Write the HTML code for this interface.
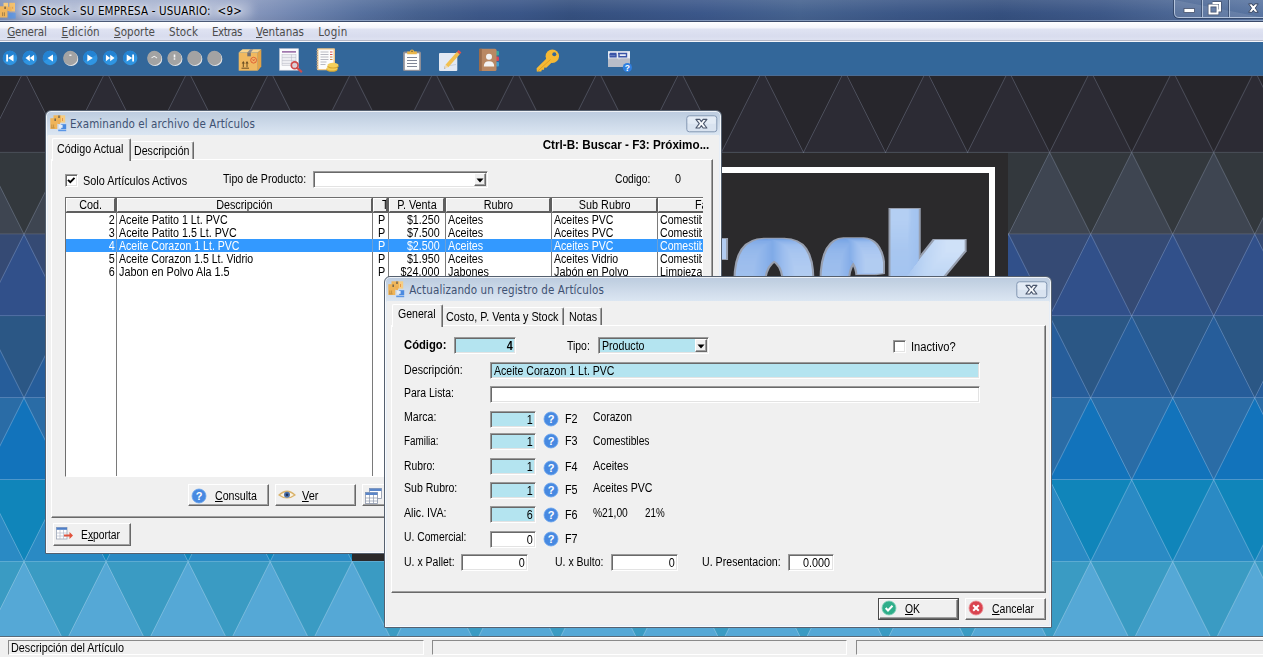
<!DOCTYPE html><html><head><meta charset="utf-8"><title>SD Stock</title><style>html,body{margin:0;padding:0}body{width:1263px;height:657px;overflow:hidden;position:relative;background:#27262c;font-family:"Liberation Sans",sans-serif;font-size:11px;color:#000}u{text-decoration:underline;text-underline-offset:1px}</style></head><body><svg style="position:absolute;left:0;top:76px" width="1263" height="560" viewBox="0 76 1263 560"><rect x="0" y="70.60" width="1263" height="82.33" fill="#27262c"/><path d="M-58.05 70.60L-17.02 152.43L-99.07 152.43ZM24.00 70.60L65.03 152.43L-17.02 152.43ZM106.05 70.60L147.07 152.43L65.03 152.43ZM188.10 70.60L229.12 152.43L147.07 152.43ZM270.15 70.60L311.17 152.43L229.12 152.43ZM352.20 70.60L393.22 152.43L311.18 152.43ZM434.25 70.60L475.27 152.43L393.23 152.43ZM516.30 70.60L557.32 152.43L475.27 152.43ZM598.35 70.60L639.38 152.43L557.33 152.43ZM680.40 70.60L721.42 152.43L639.38 152.43ZM762.45 70.60L803.47 152.43L721.42 152.43ZM844.50 70.60L885.52 152.43L803.48 152.43ZM926.55 70.60L967.57 152.43L885.52 152.43ZM1008.60 70.60L1049.62 152.43L967.57 152.43ZM1090.65 70.60L1131.67 152.43L1049.62 152.43ZM1172.70 70.60L1213.73 152.43L1131.67 152.43ZM1254.75 70.60L1295.78 152.43L1213.72 152.43Z" fill="#2c2b34" stroke="rgba(170,180,205,0.28)" stroke-width="1"/><path d="M0 152.43H1263" stroke="rgba(170,180,205,0.28)" stroke-width="1" fill="none"/><rect x="0" y="152.43" width="1263" height="82.33" fill="#33383d"/><path d="M-17.02 152.43L24.01 234.26L-58.04 234.26ZM65.03 152.43L106.06 234.26L24.01 234.26ZM147.08 152.43L188.10 234.26L106.05 234.26ZM229.13 152.43L270.15 234.26L188.10 234.26ZM311.18 152.43L352.20 234.26L270.15 234.26ZM393.23 152.43L434.25 234.26L352.21 234.26ZM475.28 152.43L516.30 234.26L434.25 234.26ZM557.33 152.43L598.35 234.26L516.30 234.26ZM639.38 152.43L680.40 234.26L598.36 234.26ZM721.43 152.43L762.45 234.26L680.40 234.26ZM803.48 152.43L844.50 234.26L762.45 234.26ZM885.53 152.43L926.55 234.26L844.50 234.26ZM967.58 152.43L1008.60 234.26L926.55 234.26ZM1049.63 152.43L1090.65 234.26L1008.60 234.26ZM1131.68 152.43L1172.70 234.26L1090.65 234.26ZM1213.73 152.43L1254.76 234.26L1172.70 234.26ZM1295.78 152.43L1336.81 234.26L1254.75 234.26Z" fill="#3e4551" stroke="rgba(170,182,210,0.30)" stroke-width="1"/><path d="M0 234.26H1263" stroke="rgba(170,182,210,0.30)" stroke-width="1" fill="none"/><rect x="0" y="234.26" width="1263" height="82.33" fill="#354a74"/><path d="M-58.05 234.26L-17.02 316.09L-99.07 316.09ZM24.00 234.26L65.03 316.09L-17.02 316.09ZM106.05 234.26L147.07 316.09L65.03 316.09ZM188.10 234.26L229.12 316.09L147.07 316.09ZM270.15 234.26L311.17 316.09L229.12 316.09ZM352.20 234.26L393.22 316.09L311.18 316.09ZM434.25 234.26L475.27 316.09L393.23 316.09ZM516.30 234.26L557.32 316.09L475.27 316.09ZM598.35 234.26L639.38 316.09L557.33 316.09ZM680.40 234.26L721.42 316.09L639.38 316.09ZM762.45 234.26L803.47 316.09L721.42 316.09ZM844.50 234.26L885.52 316.09L803.48 316.09ZM926.55 234.26L967.57 316.09L885.52 316.09ZM1008.60 234.26L1049.62 316.09L967.57 316.09ZM1090.65 234.26L1131.67 316.09L1049.62 316.09ZM1172.70 234.26L1213.73 316.09L1131.67 316.09ZM1254.75 234.26L1295.78 316.09L1213.72 316.09Z" fill="#31508a" stroke="rgba(170,195,235,0.33)" stroke-width="1"/><path d="M0 316.09H1263" stroke="rgba(170,195,235,0.33)" stroke-width="1" fill="none"/><rect x="0" y="316.09" width="1263" height="82.33" fill="#2b5785"/><path d="M-17.02 316.09L24.01 397.92L-58.04 397.92ZM65.03 316.09L106.06 397.92L24.01 397.92ZM147.08 316.09L188.10 397.92L106.05 397.92ZM229.13 316.09L270.15 397.92L188.10 397.92ZM311.18 316.09L352.20 397.92L270.15 397.92ZM393.23 316.09L434.25 397.92L352.21 397.92ZM475.28 316.09L516.30 397.92L434.25 397.92ZM557.33 316.09L598.35 397.92L516.30 397.92ZM639.38 316.09L680.40 397.92L598.36 397.92ZM721.43 316.09L762.45 397.92L680.40 397.92ZM803.48 316.09L844.50 397.92L762.45 397.92ZM885.53 316.09L926.55 397.92L844.50 397.92ZM967.58 316.09L1008.60 397.92L926.55 397.92ZM1049.63 316.09L1090.65 397.92L1008.60 397.92ZM1131.68 316.09L1172.70 397.92L1090.65 397.92ZM1213.73 316.09L1254.76 397.92L1172.70 397.92ZM1295.78 316.09L1336.81 397.92L1254.75 397.92Z" fill="#265d9a" stroke="rgba(175,200,240,0.33)" stroke-width="1"/><path d="M0 397.92H1263" stroke="rgba(175,200,240,0.33)" stroke-width="1" fill="none"/><rect x="0" y="397.92" width="1263" height="82.33" fill="#2a6ca6"/><path d="M-58.05 397.92L-17.02 479.75L-99.07 479.75ZM24.00 397.92L65.03 479.75L-17.02 479.75ZM106.05 397.92L147.07 479.75L65.03 479.75ZM188.10 397.92L229.12 479.75L147.07 479.75ZM270.15 397.92L311.17 479.75L229.12 479.75ZM352.20 397.92L393.22 479.75L311.18 479.75ZM434.25 397.92L475.27 479.75L393.23 479.75ZM516.30 397.92L557.32 479.75L475.27 479.75ZM598.35 397.92L639.38 479.75L557.33 479.75ZM680.40 397.92L721.42 479.75L639.38 479.75ZM762.45 397.92L803.47 479.75L721.42 479.75ZM844.50 397.92L885.52 479.75L803.48 479.75ZM926.55 397.92L967.57 479.75L885.52 479.75ZM1008.60 397.92L1049.62 479.75L967.57 479.75ZM1090.65 397.92L1131.67 479.75L1049.62 479.75ZM1172.70 397.92L1213.73 479.75L1131.67 479.75ZM1254.75 397.92L1295.78 479.75L1213.72 479.75Z" fill="#1273bb" stroke="rgba(195,222,250,0.33)" stroke-width="1"/><path d="M0 479.75H1263" stroke="rgba(195,222,250,0.33)" stroke-width="1" fill="none"/><rect x="0" y="479.75" width="1263" height="82.33" fill="#1085ba"/><path d="M-17.02 479.75L24.01 561.58L-58.04 561.58ZM65.03 479.75L106.06 561.58L24.01 561.58ZM147.08 479.75L188.10 561.58L106.05 561.58ZM229.13 479.75L270.15 561.58L188.10 561.58ZM311.18 479.75L352.20 561.58L270.15 561.58ZM393.23 479.75L434.25 561.58L352.21 561.58ZM475.28 479.75L516.30 561.58L434.25 561.58ZM557.33 479.75L598.35 561.58L516.30 561.58ZM639.38 479.75L680.40 561.58L598.36 561.58ZM721.43 479.75L762.45 561.58L680.40 561.58ZM803.48 479.75L844.50 561.58L762.45 561.58ZM885.53 479.75L926.55 561.58L844.50 561.58ZM967.58 479.75L1008.60 561.58L926.55 561.58ZM1049.63 479.75L1090.65 561.58L1008.60 561.58ZM1131.68 479.75L1172.70 561.58L1090.65 561.58ZM1213.73 479.75L1254.76 561.58L1172.70 561.58ZM1295.78 479.75L1336.81 561.58L1254.75 561.58Z" fill="#2a8ac4" stroke="rgba(205,230,250,0.33)" stroke-width="1"/><path d="M0 561.58H1263" stroke="rgba(205,230,250,0.33)" stroke-width="1" fill="none"/><rect x="0" y="561.58" width="1263" height="82.33" fill="#3a9bc3"/><path d="M-58.05 561.58L-17.02 643.41L-99.07 643.41ZM24.00 561.58L65.03 643.41L-17.02 643.41ZM106.05 561.58L147.07 643.41L65.03 643.41ZM188.10 561.58L229.12 643.41L147.07 643.41ZM270.15 561.58L311.17 643.41L229.12 643.41ZM352.20 561.58L393.22 643.41L311.18 643.41ZM434.25 561.58L475.27 643.41L393.23 643.41ZM516.30 561.58L557.32 643.41L475.27 643.41ZM598.35 561.58L639.38 643.41L557.33 643.41ZM680.40 561.58L721.42 643.41L639.38 643.41ZM762.45 561.58L803.47 643.41L721.42 643.41ZM844.50 561.58L885.52 643.41L803.48 643.41ZM926.55 561.58L967.57 643.41L885.52 643.41ZM1008.60 561.58L1049.62 643.41L967.57 643.41ZM1090.65 561.58L1131.67 643.41L1049.62 643.41ZM1172.70 561.58L1213.73 643.41L1131.67 643.41ZM1254.75 561.58L1295.78 643.41L1213.72 643.41Z" fill="#55a8d6" stroke="rgba(215,235,250,0.33)" stroke-width="1"/><path d="M0 643.41H1263" stroke="rgba(215,235,250,0.33)" stroke-width="1" fill="none"/></svg><div style="position:absolute;left:352.00px;top:153.00px;width:656.00px;height:408.00px;background:#2b2a2c;"></div><div style="position:absolute;left:365.00px;top:166.50px;width:617.50px;height:368.50px;border:6px solid #fff;"></div><svg style="position:absolute;left:352px;top:153px" width="656" height="408" viewBox="352 153 656 408"><defs><linearGradient id="lg" x1="0" y1="0" x2="1" y2="0"><stop offset="0" stop-color="#a9c6ef"/><stop offset="0.25" stop-color="#8db3ea"/><stop offset="0.5" stop-color="#6f9fe3"/><stop offset="0.75" stop-color="#9dbeee"/><stop offset="1" stop-color="#bcd3f3"/></linearGradient><linearGradient id="lgk" x1="0" y1="0" x2="1" y2="0.350"><stop offset="0" stop-color="#a9c7f0"/><stop offset="0.12" stop-color="#c3d9f6"/><stop offset="0.24" stop-color="#a7c6f0"/><stop offset="0.4" stop-color="#9dbfee"/><stop offset="0.7" stop-color="#bdd5f4"/><stop offset="1" stop-color="#d3e3f9"/></linearGradient><filter id="sq" filterUnits="userSpaceOnUse" x="352" y="153" width="656" height="408"><feMorphology in="SourceGraphic" operator="dilate" radius="8 4.600" result="a"/><feMorphology in="SourceAlpha" operator="dilate" radius="9.500 6.100" result="b"/><feFlood flood-color="#98a0b0"/><feComposite in2="b" operator="in" result="c"/><feMerge><feMergeNode in="c"/><feMergeNode in="a"/></feMerge></filter></defs><g filter="url(#sq)" font-family='"Liberation Sans",sans-serif' font-size="157.8"><text transform="translate(392.00 328.10) scale(0.800 1)" x="0" y="0" fill="url(#lg)">S</text><text transform="translate(485.00 328.10) scale(0.800 1)" x="0" y="0" fill="url(#lg)">D</text><text transform="translate(592.00 328.10) scale(0.800 1)" x="0" y="0" fill="url(#lg)">S</text><text transform="translate(685.00 328.10) scale(0.800 1)" x="0" y="0" fill="url(#lg)">t</text><text transform="translate(738.07 328.10) scale(0.819 1)" x="0" y="0" fill="url(#lg)">o</text><text transform="translate(825.03 328.10) scale(0.674 1)" x="0" y="0" fill="url(#lg)">c</text><text transform="translate(889.24 328.10) scale(0.876 1)" x="0" y="0" fill="url(#lgk)">k</text></g></svg><div style="position:absolute;left:0.00px;top:0.00px;width:1263.00px;height:22.00px;background:linear-gradient(90deg,#7f90b6 0,#96a4c6 30px,#9aa7c9 200px,#8797bd 250px,#6f85b0 300px,#56709e 360px,#46618f 420px,#3d5889 480px,#3a5688 520px,#35507f 570px,#3b578a 700px,#45628f 800px,#3b5787 900px,#35507f 1000px,#3d5888 1100px,#4b6694 1170px,#5a76a2 1263px);"></div><div style="position:absolute;left:0.00px;top:0.00px;width:1263.00px;height:22.00px;background:linear-gradient(180deg,rgba(255,255,255,0.10) 0,rgba(255,255,255,0) 60%,rgba(0,0,20,0.06) 100%);"></div><div style="position:absolute;left:0.00px;top:20.00px;width:1263.00px;height:1.00px;background:rgba(190,205,230,0.55);"></div><div style="position:absolute;left:0.00px;top:21.00px;width:1263.00px;height:1.00px;background:#3a4a6a;"></div><svg style="position:absolute;left:0;top:0" width="18" height="21" viewBox="0 0 18 21"><rect x="3.500" y="2.800" width="4.600" height="5.500" fill="#f6cb7e"/><rect x="9.300" y="2.800" width="5.700" height="8.700" fill="#f3be68"/><rect x="0" y="6.300" width="7.400" height="11.200" fill="#f1b65c"/><rect x="7.400" y="6.800" width="4.200" height="4.200" fill="#efb157"/><rect x="4.300" y="6.600" width="1.600" height="2.400" fill="#7d6846"/><rect x="12" y="6.800" width="1.200" height="2" fill="#e0a04c"/><path d="M2.600 12.300v3.800M4.400 12.300v3.800" stroke="#9a7a48" stroke-width="0.900"/><rect x="8.400" y="13" width="7.300" height="5.600" fill="#5e92da"/></svg><div style="position:absolute;left:16.00px;top:2.00px;width:236.00px;height:17.00px;background:rgba(255,255,255,0.30);filter:blur(5px);border-radius:8px;"></div><span style="position:absolute;left:21.60px;top:4px;font-size:11.5px;line-height:14px;letter-spacing:0.153px;color:#000;white-space:pre;font-family:'DejaVu Sans Condensed','DejaVu Sans','Liberation Sans',sans-serif;text-shadow:0 0 6px rgba(255,255,255,.9),0 0 3px rgba(255,255,255,.7);">SD Stock - SU EMPRESA - USUARIO:  &lt;9&gt;</span><svg style="position:absolute;left:1170px;top:0" width="93" height="22" viewBox="1170 0 93 22"><path d="M1174.5 0V13Q1174.5 17.5 1179 17.5H1263" fill="rgba(255,255,255,0.10)" stroke="rgba(210,222,240,0.75)" stroke-width="1"/><path d="M1173.5 0V13Q1173.5 18.5 1179 18.5H1263" fill="none" stroke="rgba(30,45,75,0.55)" stroke-width="1"/><path d="M1202.5 0V17M1229.5 0V17" stroke="rgba(210,222,240,0.7)" stroke-width="1"/><path d="M1201.5 0V17M1228.5 0V17" stroke="rgba(30,45,75,0.5)" stroke-width="1"/><rect x="1184" y="8.5" width="10.5" height="4" fill="#fff" stroke="#44506a" stroke-width="0.8"/><path d="M1212.5 3H1220V10.5H1218M1209.5 5.5H1217.5V13.5H1209.5Z" fill="none" stroke="#44506a" stroke-width="3.4"/><path d="M1212.5 3H1220V10.5H1218M1209.5 5.5H1217.5V13.5H1209.5Z" fill="none" stroke="#fff" stroke-width="2"/><path transform="translate(1253.400 8.100)" d="M-4.800 -4.200H-1.300L0 -2.100L1.300 -4.200H4.800L1.900 0L4.800 4.200H1.300L0 2.100L-1.300 4.200H-4.800L-1.900 0Z" fill="#fff" stroke="#3c4964" stroke-width="1" stroke-linejoin="round"/></svg><div style="position:absolute;left:0.00px;top:22.00px;width:1263.00px;height:19.00px;background:linear-gradient(180deg,#ffffff 0,#f4f5fb 30%,#dfe3f2 38%,#d8dcee 75%,#dfe3f2 100%);"></div><div style="position:absolute;left:0.00px;top:40.00px;width:1263.00px;height:1.00px;background:#b4b7c6;"></div><div style="position:absolute;left:0.00px;top:41.00px;width:1263.00px;height:1.00px;background:#f4f5fa;"></div><span style="position:absolute;left:7.30px;top:25px;font-size:11.5px;line-height:14px;letter-spacing:-0.214px;color:#4c4c4c;white-space:pre;font-family:'DejaVu Sans Condensed','DejaVu Sans','Liberation Sans',sans-serif;"><u>G</u>eneral</span><span style="position:absolute;left:61.50px;top:25px;font-size:11.5px;line-height:14px;letter-spacing:0.121px;color:#4c4c4c;white-space:pre;font-family:'DejaVu Sans Condensed','DejaVu Sans','Liberation Sans',sans-serif;"><u>E</u>dición</span><span style="position:absolute;left:114.00px;top:25px;font-size:11.5px;line-height:14px;letter-spacing:0.074px;color:#4c4c4c;white-space:pre;font-family:'DejaVu Sans Condensed','DejaVu Sans','Liberation Sans',sans-serif;"><u>S</u>oporte</span><span style="position:absolute;left:169.00px;top:25px;font-size:11.5px;line-height:14px;letter-spacing:0.112px;color:#4c4c4c;white-space:pre;font-family:'DejaVu Sans Condensed','DejaVu Sans','Liberation Sans',sans-serif;">Stock</span><span style="position:absolute;left:212.00px;top:25px;font-size:11.5px;line-height:14px;letter-spacing:-0.484px;color:#4c4c4c;white-space:pre;font-family:'DejaVu Sans Condensed','DejaVu Sans','Liberation Sans',sans-serif;">Extras</span><span style="position:absolute;left:256.00px;top:25px;font-size:11.5px;line-height:14px;letter-spacing:0.025px;color:#4c4c4c;white-space:pre;font-family:'DejaVu Sans Condensed','DejaVu Sans','Liberation Sans',sans-serif;"><u>V</u>entanas</span><span style="position:absolute;left:318.30px;top:25px;font-size:11.5px;line-height:14px;letter-spacing:0.259px;color:#4c4c4c;white-space:pre;font-family:'DejaVu Sans Condensed','DejaVu Sans','Liberation Sans',sans-serif;">Login</span><div style="position:absolute;left:0.00px;top:42.00px;width:1263.00px;height:34.00px;background:#33679a;"></div><div style="position:absolute;left:0.00px;top:75.00px;width:1263.00px;height:1.00px;background:#4b6b92;"></div><svg style="position:absolute;left:0;top:42px" width="660" height="34" viewBox="0 42 660 34"><circle cx="10.0" cy="58.0" r="7.2" fill="#2f95e2"/><path d="M3.5 61.2A7.2 7.2 0 0 1 16.5 54.8 Z" fill="#2383d3"/><g transform="translate(10.0 58.0)" fill="#fff" stroke="none"><path d="M-3.8 -3.5h1.8v7h-1.8zM3.5 -3.5V3.5L-2 0Z"/></g><circle cx="29.8" cy="58.0" r="7.2" fill="#2f95e2"/><path d="M23.3 61.2A7.2 7.2 0 0 1 36.3 54.8 Z" fill="#2383d3"/><g transform="translate(29.8 58.0)" fill="#fff" stroke="none"><path d="M0 -3.2V3.2L-4.3 0ZM4.3 -3.2V3.2L0 0Z"/></g><circle cx="50.0" cy="58.0" r="7.2" fill="#2f95e2"/><path d="M43.5 61.2A7.2 7.2 0 0 1 56.5 54.8 Z" fill="#2383d3"/><g transform="translate(50.0 58.0)" fill="#fff" stroke="none"><path d="M3 -3.5V3.5L-2.5 0Z"/></g><circle cx="71.0" cy="58.9" r="7.2" fill="#e8e8e8"/><circle cx="70.3" cy="58.0" r="7.2" fill="#a3a3a3"/><g transform="translate(70.3 58.0)" fill="#fff" stroke="none"><path d="M-1 -3.5h2.2v1.5h-2.2z" opacity=".8"/></g><circle cx="90.3" cy="58.0" r="7.2" fill="#2f95e2"/><path d="M83.8 61.2A7.2 7.2 0 0 1 96.8 54.8 Z" fill="#2383d3"/><g transform="translate(90.3 58.0)" fill="#fff" stroke="none"><path d="M-3 -3.5V3.5L2.5 0Z"/></g><circle cx="110.2" cy="58.0" r="7.2" fill="#2f95e2"/><path d="M103.7 61.2A7.2 7.2 0 0 1 116.7 54.8 Z" fill="#2383d3"/><g transform="translate(110.2 58.0)" fill="#fff" stroke="none"><path d="M0 -3.2V3.2L4.3 0ZM-4.3 -3.2V3.2L0 0Z"/></g><circle cx="130.2" cy="58.0" r="7.2" fill="#2f95e2"/><path d="M123.7 61.2A7.2 7.2 0 0 1 136.7 54.8 Z" fill="#2383d3"/><g transform="translate(130.2 58.0)" fill="#fff" stroke="none"><path d="M3.8 -3.5h-1.8v7h1.8zM-3.5 -3.5V3.5L2 0Z"/></g><circle cx="155.0" cy="58.9" r="7.2" fill="#e8e8e8"/><circle cx="154.3" cy="58.0" r="7.2" fill="#a3a3a3"/><g transform="translate(154.3 58.0)" fill="#fff" stroke="none"><path d="M-3 -0.5L0 -2.2L3 -0.3L2.6 0.4L0 -1.2L-2.6 0.3Z" opacity=".9"/></g><circle cx="175.2" cy="58.9" r="7.2" fill="#e8e8e8"/><circle cx="174.5" cy="58.0" r="7.2" fill="#a3a3a3"/><g transform="translate(174.5 58.0)" fill="#fff" stroke="none"><path d="M-0.8 -3.5h1.6v3h-1.6zM-0.8 0.3h1.6v1.4h-1.6z" opacity=".9"/></g><circle cx="195.1" cy="58.9" r="7.2" fill="#e8e8e8"/><circle cx="194.4" cy="58.0" r="7.2" fill="#a3a3a3"/><g transform="translate(194.4 58.0)" fill="#fff" stroke="none"></g><circle cx="215.1" cy="58.9" r="7.2" fill="#e8e8e8"/><circle cx="214.4" cy="58.0" r="7.2" fill="#a3a3a3"/><g transform="translate(214.4 58.0)" fill="#fff" stroke="none"></g><g><rect x="238.700" y="52.500" width="19.100" height="18.200" fill="#f0b960"/><path d="M238.700 52.500L242.500 49.300H261.300L257.800 52.500Z" fill="#f8d48e"/><path d="M257.800 52.500L261.300 49.300V66.600L257.800 70.700Z" fill="#e2a347"/><path d="M247.300 52.500L250.200 49.300H253.400L250.800 52.500Z" fill="#8a8b92"/><rect x="247.300" y="52.500" width="3.500" height="3.800" fill="#6d6e76"/><path d="M241.500 68.200h7.500" stroke="#6b4e22" stroke-width="1"/><path d="M243.300 67.200v-4.200M247 67.200v-4.200" stroke="#6b4e22" stroke-width="1"/><path d="M241.700 63.600l1.600-2.600l1.600 2.600zM245.400 63.600l1.600-2.600l1.600 2.600z" fill="#6b4e22"/><circle cx="253.600" cy="60.200" r="2.900" fill="#f3b868" stroke="#dc5a30" stroke-width="0.900"/><path d="M252.500 59.100l2.200 2.200M254.700 59.100l-2.200 2.200" stroke="#dc5a30" stroke-width="0.800"/></g><g><rect x="279.6" y="48.7" width="19" height="21.5" fill="#fbfbfd" stroke="#c9cbd6" stroke-width="0.6"/><rect x="282" y="51.3" width="14" height="1.2" fill="#7a3f8a"/><rect x="282" y="54.5" width="14" height="11" fill="#ededf2" stroke="#b9bbc6" stroke-width="0.5"/><path d="M282 57.5h14M282 60.5h14M282 63.5h14M291.5 54.5v11" stroke="#b9bbc6" stroke-width="0.5"/><circle cx="294.7" cy="65.3" r="3.4" fill="#d8c9d0" fill-opacity="0.8" stroke="#cf4a4a" stroke-width="1.7"/><path d="M297.3 68l4 3.6" stroke="#cf4a4a" stroke-width="2.2" stroke-linecap="round"/></g><g><rect x="317" y="48.3" width="18" height="22" rx="1" fill="#f0c98c"/><rect x="318.5" y="49.6" width="15" height="19.4" fill="#fcfcfc"/><path d="M316 50.5h2M316 53h2M316 55.500h2M316 58h2M316 60.500h2M316 63h2M316 65.500h2M316 68h2" stroke="#8a8a92" stroke-width="1"/><path d="M320.5 52h8M320.500 54.500h8M320.500 57h8M320.500 59.500h8M320.500 62h6M320.500 64.500h5" stroke="#b8bac2" stroke-width="1"/><path d="M330 52h2.500M330 54.500h2.500" stroke="#d9534a" stroke-width="1"/><path d="M330 57h2.500M330 59.500h2.500" stroke="#c98a4a" stroke-width="1"/><ellipse cx="332" cy="69.500" rx="5.5" ry="2.300" fill="#d9a830"/><ellipse cx="332" cy="68.300" rx="5.5" ry="2.300" fill="#f3cf5c"/><ellipse cx="333" cy="66.300" rx="5.5" ry="2.300" fill="#d9a830"/><ellipse cx="333" cy="65.100" rx="5.5" ry="2.300" fill="#f3cf5c"/></g><g><rect x="403" y="51.500" width="18" height="19.500" rx="1.5" fill="#8e8f98"/><rect x="404.800" y="53.300" width="14.400" height="16.500" fill="#fdfdfd"/><path d="M407.200 54.300V51.600H410A2 2 0 0 1 414 51.600H416.800V54.300Z" fill="#eab64a"/><circle cx="412" cy="51.300" r="0.800" fill="#6a5a30"/><path d="M407 57.500h10M407 60.500h10M407 63.500h10M407 66.500h10" stroke="#7f8696" stroke-width="1.100"/></g><g><rect x="439" y="53" width="18.300" height="18" rx="1" fill="#e3e9f3"/><path d="M444 66.5l12-2" stroke="#c9cfda" stroke-width="1.2"/><path d="M445.500 64.800L457 51.800L459.800 54.300L448.300 67.300Z" fill="#f2c04e"/><path d="M445.500 64.800L448.300 67.300L444.200 68.600Z" fill="#f0d9b0"/><path d="M444.200 68.600l1.300-0.400l-0.900-0.800z" fill="#555"/><path d="M457 51.800L458.600 50L461.400 52.500L459.800 54.300Z" fill="#e0524e"/></g><g><rect x="495.500" y="51" width="3.500" height="4.500" rx="1" fill="#3aa6a0"/><rect x="495.500" y="56.500" width="3.500" height="4.500" rx="1" fill="#d8475a"/><rect x="495.500" y="62" width="3.500" height="4.500" rx="1" fill="#3f9fd0"/><rect x="479" y="48.700" width="17.500" height="22.300" rx="1.500" fill="#b98863"/><rect x="479" y="48.700" width="2.800" height="22.300" fill="#9a6c4c"/><circle cx="489" cy="56.800" r="3" fill="#f3f3f3"/><path d="M483.800 66.500Q483.800 61.200 489 61.200Q494.200 61.200 494.200 66.500Z" fill="#f3f3f3"/></g><g><path d="M536.600 68.300L548 57L552.800 61.500L546.300 67.800L544.300 67.500L544 69.800L541.800 69.800L541.300 71.600L536.800 71.600Z" fill="#f5b935"/><circle cx="552.300" cy="56.300" r="6.700" fill="#f5b935"/><circle cx="554.300" cy="54.300" r="2" fill="#33679a"/><path d="M537.500 71.300L550.500 59.500" stroke="#d99a20" stroke-width="0.800"/></g><g><rect x="608" y="51.300" width="22" height="15.700" fill="#c9cdd6"/><path d="M608 60L614 56L619 60L625 55L630 59V67H608Z" fill="#b9bdc8"/><rect x="608" y="51.300" width="22" height="7" fill="#e8ecf4"/><path d="M610 53.500h6.500M610 53.500v1.500h6v1.800h-6.500M618 53.500h8.500v3.300h-7.500v-3.300M610 53.500" fill="none" stroke="#3b55a8" stroke-width="1.400"/><circle cx="627.400" cy="67.500" r="4.600" fill="#2f7fe0"/><text x="627.400" y="70.600" font-family='"Liberation Sans",sans-serif' font-size="8.500" font-weight="bold" fill="#fff" text-anchor="middle">?</text></g></svg><div style="position:absolute;left:45px;top:110px;width:677px;height:444px;box-sizing:border-box;border:1px solid #55606f;border-radius:6px 6px 1px 1px;background:linear-gradient(180deg,#bccbdf 0,#c3d2e3 6px,#d0dceb 15px,#dbe6f2 24px,#e7eef7 25.500px,#e7eef7 100%);box-shadow:inset 0 0 0 1px rgba(255,255,255,.75);"></div><div style="position:absolute;left:48.00px;top:135.00px;width:671.00px;height:416.00px;background:#f0f0f0;"></div><svg style="position:absolute;left:50.0px;top:114.7px" width="17" height="17" viewBox="0 0 17 17"><rect x="3.500" y="0.300" width="7.500" height="7.300" fill="#f0b65a"/><rect x="11" y="0.300" width="4.200" height="7.300" fill="#f6cd82"/><rect x="0.300" y="3.200" width="7" height="10.800" fill="#efb458"/><rect x="7.300" y="5" width="2.700" height="4" fill="#eeb055"/><rect x="4.400" y="3.500" width="1.600" height="2.500" fill="#7a6a50"/><rect x="8.200" y="0.500" width="1.600" height="2.500" fill="#7a6a50"/><rect x="12" y="3" width="1" height="3" fill="#e8964a"/><path d="M1.800 9.500v3M3.600 9.500v3M1 12.900h3.600" stroke="#a87a38" stroke-width="0.600"/><rect x="11.200" y="9.200" width="5" height="4.800" fill="#4a8ae0"/><rect x="9" y="9.900" width="3.600" height="2.900" fill="#e4edf9"/><rect x="8.200" y="14.600" width="8" height="1.600" fill="#5a96e6"/></svg><span style="position:absolute;left:70.00px;top:117px;font-size:11.5px;line-height:14px;letter-spacing:0.069px;color:#3f5273;white-space:pre;font-family:'DejaVu Sans Condensed','DejaVu Sans','Liberation Sans',sans-serif;">Examinando el archivo de Artículos</span><svg style="position:absolute;left:686px;top:115px" width="32" height="18" viewBox="0 0 32 18"><rect x="0.800" y="0.800" width="30" height="16" rx="2.500" fill="#d9e3f0" stroke="#8497b3" stroke-width="1"/><rect x="1.800" y="1.800" width="28" height="7" rx="1.500" fill="#e3ebf5"/><path transform="translate(15.400 8.700)" d="M-5.500 -4.300H-1.700L0 -2L1.700 -4.300H5.500L2.100 0L5.500 4.300H1.700L0 2L-1.700 4.300H-5.500L-2.100 0Z" fill="#f7f9fc" stroke="#4a566c" stroke-width="1.100" stroke-linejoin="round"/></svg><div style="position:absolute;left:51.00px;top:159.00px;width:661.70px;height:359.00px;box-sizing:border-box;border:1px solid;border-color:#fff #696969 #696969 #fff;box-shadow:inset -1px -1px 0 #a0a0a0;background:#f0f0f0;"></div><div style="position:absolute;left:52.00px;top:138.00px;width:78.50px;height:23.00px;box-sizing:border-box;background:#f0f0f0;border-left:1px solid #fff;border-top:1px solid #fff;border-right:1px solid #696969;border-radius:2px 2px 0 0;box-shadow:inset -1px 0 0 #a0a0a0;"></div><div style="position:absolute;left:130.50px;top:141.00px;width:63.80px;height:18.00px;box-sizing:border-box;background:#f0f0f0;border-top:1px solid #fff;border-right:1px solid #696969;border-radius:2px 2px 0 0;box-shadow:inset -1px 0 0 #a0a0a0;"></div><span style="position:absolute;left:57.00px;top:142px;font-size:12px;line-height:14px;transform:scaleX(0.8979);transform-origin:0 0;color:#000;white-space:pre;">Código Actual</span><span style="position:absolute;left:133.50px;top:144px;font-size:12px;line-height:14px;transform:scaleX(0.8851);transform-origin:0 0;color:#000;white-space:pre;">Descripción</span><span style="position:absolute;right:553.50px;top:138px;font-size:12px;line-height:14px;font-weight:bold;transform:scaleX(0.9728);transform-origin:100% 0;color:#000;white-space:pre;">Ctrl-B: Buscar - F3: Próximo...</span><div style="position:absolute;left:65.00px;top:174.00px;width:12.50px;height:12.50px;box-sizing:border-box;background:#fff;border:1px solid;border-color:#9a9a9a #fff #fff #9a9a9a;box-shadow:inset 1px 1px 0 #696969,inset -1px -1px 0 #e3e3e3;"></div><svg style="position:absolute;left:65.0px;top:174.0px" width="13" height="13" viewBox="0 0 13 13"><path d="M3 5.800l2.300 2.400L9.500 3.800" fill="none" stroke="#000" stroke-width="1.900"/></svg><span style="position:absolute;left:83.30px;top:174px;font-size:12px;line-height:14px;transform:scaleX(0.9073);transform-origin:0 0;color:#000;white-space:pre;">Solo Artículos Activos</span><span style="position:absolute;left:222.50px;top:172px;font-size:12px;line-height:14px;transform:scaleX(0.8825);transform-origin:0 0;color:#000;white-space:pre;">Tipo de Producto:</span><div style="position:absolute;left:313.00px;top:171.00px;width:174.50px;height:17.00px;box-sizing:border-box;background:#fff;border:1px solid;border-color:#9a9a9a #fff #fff #9a9a9a;box-shadow:inset 1px 1px 0 #696969,inset -1px -1px 0 #e3e3e3;"></div><div style="position:absolute;left:473.50px;top:173.00px;width:12.00px;height:13.00px;box-sizing:border-box;background:#f0f0f0;border:1px solid;border-color:#fff #696969 #696969 #fff;box-shadow:inset -1px -1px 0 #a0a0a0;"></div><svg style="position:absolute;left:473.5px;top:173.5px" width="12" height="12" viewBox="0 0 12 12"><path d="M2.500 4.500h7L6 8.500Z" fill="#000"/></svg><span style="position:absolute;left:614.60px;top:172px;font-size:12px;line-height:14px;transform:scaleX(0.8556);transform-origin:0 0;color:#000;white-space:pre;">Codigo:</span><span style="position:absolute;left:675.00px;top:172px;font-size:12px;line-height:14px;transform:scaleX(0.9000);transform-origin:0 0;color:#000;white-space:pre;">0</span><div style="position:absolute;left:64.50px;top:196.50px;width:638.00px;height:280.00px;box-sizing:border-box;background:#fff;border:1.500px solid #6e6e6e;border-right:none;border-bottom:1px solid #fff;"></div><div style="position:absolute;left:66px;top:198px;width:636.500px;height:278px;overflow:hidden;"><div style="position:absolute;left:0;top:0;width:720px;height:14.500px;background:#5f5f5f;"></div><div style="position:absolute;left:0.00px;top:0.00px;width:49.30px;height:14.00px;box-sizing:border-box;background:#f0f0f0;border:1px solid;border-color:#fff #5f5f5f #5f5f5f #fff;overflow:hidden;font-size:12px;line-height:12px;white-space:pre;text-align:center;"><span style="display:inline-block;transform:scaleX(0.9);transform-origin:50% 0">Cod.</span></div><div style="position:absolute;left:50.80px;top:0.00px;width:254.90px;height:14.00px;box-sizing:border-box;background:#f0f0f0;border:1px solid;border-color:#fff #5f5f5f #5f5f5f #fff;overflow:hidden;font-size:12px;line-height:12px;white-space:pre;text-align:center;"><span style="display:inline-block;transform:scaleX(0.9);transform-origin:50% 0">Descripción</span></div><div style="position:absolute;left:307.20px;top:0.00px;width:14.30px;height:14.00px;box-sizing:border-box;background:#f0f0f0;border:1px solid;border-color:#fff #5f5f5f #5f5f5f #fff;overflow:hidden;font-size:12px;line-height:12px;white-space:pre;text-align:left;padding-left:7.50px;"><span style="display:inline-block;transform:scaleX(0.9);transform-origin:0 0">Tipo</span></div><div style="position:absolute;left:323.00px;top:0.00px;width:55.30px;height:14.00px;box-sizing:border-box;background:#f0f0f0;border:1px solid;border-color:#fff #5f5f5f #5f5f5f #fff;overflow:hidden;font-size:12px;line-height:12px;white-space:pre;text-align:center;"><span style="display:inline-block;transform:scaleX(0.9);transform-origin:50% 0">P. Venta</span></div><div style="position:absolute;left:379.80px;top:0.00px;width:104.50px;height:14.00px;box-sizing:border-box;background:#f0f0f0;border:1px solid;border-color:#fff #5f5f5f #5f5f5f #fff;overflow:hidden;font-size:12px;line-height:12px;white-space:pre;text-align:center;"><span style="display:inline-block;transform:scaleX(0.9);transform-origin:50% 0">Rubro</span></div><div style="position:absolute;left:485.80px;top:0.00px;width:105.00px;height:14.00px;box-sizing:border-box;background:#f0f0f0;border:1px solid;border-color:#fff #5f5f5f #5f5f5f #fff;overflow:hidden;font-size:12px;line-height:12px;white-space:pre;text-align:center;"><span style="display:inline-block;transform:scaleX(0.9);transform-origin:50% 0">Sub Rubro</span></div><div style="position:absolute;left:592.30px;top:0.00px;width:107.00px;height:14.00px;box-sizing:border-box;background:#f0f0f0;border:1px solid;border-color:#fff #5f5f5f #5f5f5f #fff;overflow:hidden;font-size:12px;line-height:12px;white-space:pre;text-align:left;padding-left:35.70px;"><span style="display:inline-block;transform:scaleX(0.9);transform-origin:0 0">Familia</span></div><div style="position:absolute;left:49.50px;top:14px;width:1px;height:264px;background:#7a7a7a;"></div><div style="position:absolute;left:305.90px;top:14px;width:1px;height:264px;background:#7a7a7a;"></div><div style="position:absolute;left:321.70px;top:14px;width:1px;height:264px;background:#7a7a7a;"></div><div style="position:absolute;left:378.50px;top:14px;width:1px;height:264px;background:#7a7a7a;"></div><div style="position:absolute;left:484.50px;top:14px;width:1px;height:264px;background:#7a7a7a;"></div><div style="position:absolute;left:591.00px;top:14px;width:1px;height:264px;background:#7a7a7a;"></div></div><span style="position:absolute;right:1148.30px;top:213px;font-size:12px;line-height:14px;transform:scaleX(0.9000);transform-origin:100% 0;color:#000;white-space:pre;">2</span><span style="position:absolute;left:119.00px;top:213px;font-size:12px;line-height:14px;transform:scaleX(0.8897);transform-origin:0 0;color:#000;white-space:pre;">Aceite Patito 1 Lt. PVC</span><span style="position:absolute;left:377.80px;top:213px;font-size:12px;line-height:14px;transform:scaleX(0.9000);transform-origin:0 0;color:#000;white-space:pre;">P</span><span style="position:absolute;right:823.70px;top:213px;font-size:12px;line-height:14px;transform:scaleX(0.8937);transform-origin:100% 0;color:#000;white-space:pre;">$1.250</span><span style="position:absolute;left:447.60px;top:213px;font-size:12px;line-height:14px;transform:scaleX(0.8943);transform-origin:0 0;color:#000;white-space:pre;">Aceites</span><span style="position:absolute;left:553.80px;top:213px;font-size:12px;line-height:14px;transform:scaleX(0.8818);transform-origin:0 0;color:#000;white-space:pre;">Aceites PVC</span><div style="position:absolute;left:660.300px;top:213.0px;width:42.200px;height:14px;overflow:hidden;font-size:12px;line-height:14px;white-space:pre;color:#000"><span style="display:inline-block;transform:scaleX(0.88);transform-origin:0 0">Comestibles</span></div><span style="position:absolute;right:1148.30px;top:226px;font-size:12px;line-height:14px;transform:scaleX(0.9000);transform-origin:100% 0;color:#000;white-space:pre;">3</span><span style="position:absolute;left:119.00px;top:226px;font-size:12px;line-height:14px;transform:scaleX(0.8911);transform-origin:0 0;color:#000;white-space:pre;">Aceite Patito 1.5 Lt. PVC</span><span style="position:absolute;left:377.80px;top:226px;font-size:12px;line-height:14px;transform:scaleX(0.9000);transform-origin:0 0;color:#000;white-space:pre;">P</span><span style="position:absolute;right:823.70px;top:226px;font-size:12px;line-height:14px;transform:scaleX(0.8937);transform-origin:100% 0;color:#000;white-space:pre;">$7.500</span><span style="position:absolute;left:447.60px;top:226px;font-size:12px;line-height:14px;transform:scaleX(0.8943);transform-origin:0 0;color:#000;white-space:pre;">Aceites</span><span style="position:absolute;left:553.80px;top:226px;font-size:12px;line-height:14px;transform:scaleX(0.8818);transform-origin:0 0;color:#000;white-space:pre;">Aceites PVC</span><div style="position:absolute;left:660.300px;top:226.0px;width:42.200px;height:14px;overflow:hidden;font-size:12px;line-height:14px;white-space:pre;color:#000"><span style="display:inline-block;transform:scaleX(0.88);transform-origin:0 0">Comestibles</span></div><div style="position:absolute;left:66.00px;top:239.30px;width:636.50px;height:13.00px;background:#3399ff;"></div><div style="position:absolute;left:115.50px;top:239.30px;width:1.00px;height:13.00px;background:#6aa0d8;"></div><div style="position:absolute;left:371.90px;top:239.30px;width:1.00px;height:13.00px;background:#6aa0d8;"></div><div style="position:absolute;left:387.70px;top:239.30px;width:1.00px;height:13.00px;background:#6aa0d8;"></div><div style="position:absolute;left:444.50px;top:239.30px;width:1.00px;height:13.00px;background:#6aa0d8;"></div><div style="position:absolute;left:550.50px;top:239.30px;width:1.00px;height:13.00px;background:#6aa0d8;"></div><div style="position:absolute;left:657.00px;top:239.30px;width:1.00px;height:13.00px;background:#6aa0d8;"></div><span style="position:absolute;right:1148.30px;top:239px;font-size:12px;line-height:14px;transform:scaleX(0.9000);transform-origin:100% 0;color:#fff;white-space:pre;">4</span><span style="position:absolute;left:119.00px;top:239px;font-size:12px;line-height:14px;transform:scaleX(0.8813);transform-origin:0 0;color:#fff;white-space:pre;">Aceite Corazon 1 Lt. PVC</span><span style="position:absolute;left:377.80px;top:239px;font-size:12px;line-height:14px;transform:scaleX(0.9000);transform-origin:0 0;color:#fff;white-space:pre;">P</span><span style="position:absolute;right:823.70px;top:239px;font-size:12px;line-height:14px;transform:scaleX(0.8937);transform-origin:100% 0;color:#fff;white-space:pre;">$2.500</span><span style="position:absolute;left:447.60px;top:239px;font-size:12px;line-height:14px;transform:scaleX(0.8943);transform-origin:0 0;color:#fff;white-space:pre;">Aceites</span><span style="position:absolute;left:553.80px;top:239px;font-size:12px;line-height:14px;transform:scaleX(0.8818);transform-origin:0 0;color:#fff;white-space:pre;">Aceites PVC</span><div style="position:absolute;left:660.300px;top:239.0px;width:42.200px;height:14px;overflow:hidden;font-size:12px;line-height:14px;white-space:pre;color:#fff"><span style="display:inline-block;transform:scaleX(0.88);transform-origin:0 0">Comestibles</span></div><span style="position:absolute;right:1148.30px;top:252px;font-size:12px;line-height:14px;transform:scaleX(0.9000);transform-origin:100% 0;color:#000;white-space:pre;">5</span><span style="position:absolute;left:119.00px;top:252px;font-size:12px;line-height:14px;transform:scaleX(0.8798);transform-origin:0 0;color:#000;white-space:pre;">Aceite Corazon 1.5 Lt. Vidrio</span><span style="position:absolute;left:377.80px;top:252px;font-size:12px;line-height:14px;transform:scaleX(0.9000);transform-origin:0 0;color:#000;white-space:pre;">P</span><span style="position:absolute;right:823.70px;top:252px;font-size:12px;line-height:14px;transform:scaleX(0.8937);transform-origin:100% 0;color:#000;white-space:pre;">$1.950</span><span style="position:absolute;left:447.60px;top:252px;font-size:12px;line-height:14px;transform:scaleX(0.8943);transform-origin:0 0;color:#000;white-space:pre;">Aceites</span><span style="position:absolute;left:553.80px;top:252px;font-size:12px;line-height:14px;transform:scaleX(0.8776);transform-origin:0 0;color:#000;white-space:pre;">Aceites Vidrio</span><div style="position:absolute;left:660.300px;top:252.0px;width:42.200px;height:14px;overflow:hidden;font-size:12px;line-height:14px;white-space:pre;color:#000"><span style="display:inline-block;transform:scaleX(0.88);transform-origin:0 0">Comestibles</span></div><span style="position:absolute;right:1148.30px;top:265px;font-size:12px;line-height:14px;transform:scaleX(0.9000);transform-origin:100% 0;color:#000;white-space:pre;">6</span><span style="position:absolute;left:119.00px;top:265px;font-size:12px;line-height:14px;transform:scaleX(0.9009);transform-origin:0 0;color:#000;white-space:pre;">Jabon en Polvo Ala 1.5</span><span style="position:absolute;left:377.80px;top:265px;font-size:12px;line-height:14px;transform:scaleX(0.9000);transform-origin:0 0;color:#000;white-space:pre;">P</span><span style="position:absolute;right:823.70px;top:265px;font-size:12px;line-height:14px;transform:scaleX(0.8965);transform-origin:100% 0;color:#000;white-space:pre;">$24.000</span><span style="position:absolute;left:447.60px;top:265px;font-size:12px;line-height:14px;transform:scaleX(0.8992);transform-origin:0 0;color:#000;white-space:pre;">Jabones</span><span style="position:absolute;left:553.80px;top:265px;font-size:12px;line-height:14px;transform:scaleX(0.9017);transform-origin:0 0;color:#000;white-space:pre;">Jabón en Polvo</span><div style="position:absolute;left:660.300px;top:265.0px;width:42.200px;height:14px;overflow:hidden;font-size:12px;line-height:14px;white-space:pre;color:#000"><span style="display:inline-block;transform:scaleX(0.88);transform-origin:0 0">Limpieza</span></div><div style="position:absolute;left:188.00px;top:484.00px;width:80.60px;height:22.40px;box-sizing:border-box;background:#f0f0f0;border:1px solid;border-color:#fff #696969 #696969 #fff;box-shadow:inset -1px -1px 0 #a0a0a0;"></div><svg style="position:absolute;left:191.00px;top:487.50px" width="16" height="16" viewBox="-8 -8 16 16"><circle r="7" fill="#4789e1"/><circle r="7" fill="none" stroke="#6aa4ee" stroke-width="0.8"/><text x="0" y="3.900" font-family='"Liberation Sans",sans-serif' font-size="11" font-weight="bold" fill="#fff" text-anchor="middle">?</text></svg><span style="position:absolute;left:215.00px;top:489px;font-size:12px;line-height:14px;transform:scaleX(0.8865);transform-origin:0 0;color:#000;white-space:pre;"><u>C</u>onsulta</span><div style="position:absolute;left:275.00px;top:484.00px;width:80.80px;height:22.40px;box-sizing:border-box;background:#f0f0f0;border:1px solid;border-color:#fff #696969 #696969 #fff;box-shadow:inset -1px -1px 0 #a0a0a0;"></div><svg style="position:absolute;left:278px;top:488px" width="18" height="14" viewBox="0 0 18 14"><path d="M1 7Q9 -0.500 17 7Q9 13 1 7Z" fill="#fbf3e2" stroke="#d9b26a" stroke-width="1.200"/><circle cx="9" cy="6.800" r="3" fill="#4a6fa8"/><circle cx="9" cy="6.800" r="1.300" fill="#1d2f55"/></svg><span style="position:absolute;left:302.00px;top:489px;font-size:12px;line-height:14px;transform:scaleX(0.9159);transform-origin:0 0;color:#000;white-space:pre;"><u>V</u>er</span><div style="position:absolute;left:362.00px;top:484.00px;width:80.80px;height:22.40px;box-sizing:border-box;background:#f0f0f0;border:1px solid;border-color:#fff #696969 #696969 #fff;box-shadow:inset -1px -1px 0 #a0a0a0;"></div><svg style="position:absolute;left:365px;top:487px" width="18" height="18" viewBox="0 0 18 18"><rect x="4.500" y="1.500" width="12" height="10" fill="#fff" stroke="#8a95aa" stroke-width="0.800"/><rect x="4.500" y="1.500" width="12" height="2.500" fill="#5b86c8"/><rect x="0.500" y="5.500" width="12" height="11" fill="#fff" stroke="#8a95aa" stroke-width="0.800"/><rect x="0.500" y="5.500" width="12" height="2.500" fill="#5b86c8"/><path d="M0.500 11h12M0.500 14h12M4.500 8v8.500M8.500 8v8.500" stroke="#8a95aa" stroke-width="0.700"/></svg><div style="position:absolute;left:53.00px;top:523.00px;width:77.70px;height:22.80px;box-sizing:border-box;background:#f0f0f0;border:1px solid;border-color:#fff #696969 #696969 #fff;box-shadow:inset -1px -1px 0 #a0a0a0;"></div><svg style="position:absolute;left:56px;top:527px" width="18" height="15" viewBox="0 0 18 15"><rect x="0.500" y="0.500" width="10.500" height="11.500" fill="#fff" stroke="#9aa3b5" stroke-width="0.800"/><rect x="0.500" y="0.500" width="10.500" height="2.300" fill="#4f7fc8"/><path d="M0.500 6h10.500M0.500 9h10.500M4 3v9M7.500 3v9" stroke="#b5bccb" stroke-width="0.700"/><path d="M8 7.500h5.500V5l3.500 3.500L13.500 12V9.500H8Z" fill="#e0523c"/></svg><span style="position:absolute;left:80.50px;top:528px;font-size:12px;line-height:14px;transform:scaleX(0.8595);transform-origin:0 0;color:#000;white-space:pre;">E<u>x</u>portar</span><div style="position:absolute;left:384px;top:276px;width:668px;height:352px;box-sizing:border-box;border:1px solid #55606f;border-radius:6px 6px 1px 1px;background:linear-gradient(180deg,#bccbdf 0,#c3d2e3 6px,#d0dceb 15px,#dbe6f2 24px,#e7eef7 25.500px,#e7eef7 100%);box-shadow:inset 0 0 0 1px rgba(255,255,255,.75);"></div><div style="position:absolute;left:387.00px;top:301.00px;width:662.00px;height:324.00px;background:#f0f0f0;"></div><svg style="position:absolute;left:388.0px;top:280.7px" width="17" height="17" viewBox="0 0 17 17"><rect x="3.500" y="0.300" width="7.500" height="7.300" fill="#f0b65a"/><rect x="11" y="0.300" width="4.200" height="7.300" fill="#f6cd82"/><rect x="0.300" y="3.200" width="7" height="10.800" fill="#efb458"/><rect x="7.300" y="5" width="2.700" height="4" fill="#eeb055"/><rect x="4.400" y="3.500" width="1.600" height="2.500" fill="#7a6a50"/><rect x="8.200" y="0.500" width="1.600" height="2.500" fill="#7a6a50"/><rect x="12" y="3" width="1" height="3" fill="#e8964a"/><path d="M1.800 9.500v3M3.600 9.500v3M1 12.900h3.600" stroke="#a87a38" stroke-width="0.600"/><rect x="11.200" y="9.200" width="5" height="4.800" fill="#4a8ae0"/><rect x="9" y="9.900" width="3.600" height="2.900" fill="#e4edf9"/><rect x="8.200" y="14.600" width="8" height="1.600" fill="#5a96e6"/></svg><span style="position:absolute;left:409.30px;top:283px;font-size:11.5px;line-height:14px;letter-spacing:0.117px;color:#3f5273;white-space:pre;font-family:'DejaVu Sans Condensed','DejaVu Sans','Liberation Sans',sans-serif;">Actualizando un registro de Artículos</span><svg style="position:absolute;left:1016px;top:281px" width="32" height="18" viewBox="0 0 32 18"><rect x="0.800" y="0.800" width="30" height="16" rx="2.500" fill="#d9e3f0" stroke="#8497b3" stroke-width="1"/><rect x="1.800" y="1.800" width="28" height="7" rx="1.500" fill="#e3ebf5"/><path transform="translate(15.400 8.700)" d="M-5.500 -4.300H-1.700L0 -2L1.700 -4.300H5.500L2.100 0L5.500 4.300H1.700L0 2L-1.700 4.300H-5.500L-2.100 0Z" fill="#f7f9fc" stroke="#4a566c" stroke-width="1.100" stroke-linejoin="round"/></svg><div style="position:absolute;left:391.00px;top:325.00px;width:655.30px;height:267.80px;box-sizing:border-box;border:1px solid;border-color:#fff #696969 #696969 #fff;box-shadow:inset -1px -1px 0 #a0a0a0;background:#f0f0f0;"></div><div style="position:absolute;left:392.00px;top:304.00px;width:50.50px;height:23.00px;box-sizing:border-box;background:#f0f0f0;border-left:1px solid #fff;border-top:1px solid #fff;border-right:1px solid #696969;border-radius:2px 2px 0 0;box-shadow:inset -1px 0 0 #a0a0a0;"></div><div style="position:absolute;left:442.50px;top:307.00px;width:121.00px;height:18.00px;box-sizing:border-box;background:#f0f0f0;border-top:1px solid #fff;border-right:1px solid #696969;border-radius:2px 2px 0 0;box-shadow:inset -1px 0 0 #a0a0a0;"></div><div style="position:absolute;left:563.50px;top:307.00px;width:38.50px;height:18.00px;box-sizing:border-box;background:#f0f0f0;border-top:1px solid #fff;border-right:1px solid #696969;border-radius:2px 2px 0 0;box-shadow:inset -1px 0 0 #a0a0a0;"></div><span style="position:absolute;left:398.30px;top:307px;font-size:12px;line-height:14px;transform:scaleX(0.8782);transform-origin:0 0;color:#000;white-space:pre;">General</span><span style="position:absolute;left:445.50px;top:310px;font-size:12px;line-height:14px;transform:scaleX(0.9034);transform-origin:0 0;color:#000;white-space:pre;">Costo, P. Venta y Stock</span><span style="position:absolute;left:568.50px;top:310px;font-size:12px;line-height:14px;transform:scaleX(0.8929);transform-origin:0 0;color:#000;white-space:pre;">Notas</span><span style="position:absolute;left:404.00px;top:338px;font-size:12px;line-height:14px;font-weight:bold;transform:scaleX(0.9376);transform-origin:0 0;color:#000;white-space:pre;">Código:</span><div style="position:absolute;left:454.00px;top:337.00px;width:61.50px;height:17.00px;box-sizing:border-box;background:#b4e4f0;border:1px solid;border-color:#9a9a9a #fff #fff #9a9a9a;box-shadow:inset 1px 1px 0 #696969,inset -1px -1px 0 #e3e3e3;"></div><span style="position:absolute;right:750.20px;top:339px;font-size:12px;line-height:14px;font-weight:bold;transform:scaleX(0.9000);transform-origin:100% 0;color:#000;white-space:pre;">4</span><span style="position:absolute;left:566.70px;top:339px;font-size:12px;line-height:14px;transform:scaleX(0.8691);transform-origin:0 0;color:#000;white-space:pre;">Tipo:</span><div style="position:absolute;left:598.00px;top:337.00px;width:110.50px;height:17.00px;box-sizing:border-box;background:#b4e4f0;border:1px solid;border-color:#9a9a9a #fff #fff #9a9a9a;box-shadow:inset 1px 1px 0 #696969,inset -1px -1px 0 #e3e3e3;"></div><div style="position:absolute;left:694.50px;top:339.00px;width:12.00px;height:13.00px;box-sizing:border-box;background:#f0f0f0;border:1px solid;border-color:#fff #696969 #696969 #fff;box-shadow:inset -1px -1px 0 #a0a0a0;"></div><svg style="position:absolute;left:694.5px;top:339.5px" width="12" height="12" viewBox="0 0 12 12"><path d="M2.500 4.500h7L6 8.500Z" fill="#000"/></svg><span style="position:absolute;left:601.80px;top:339px;font-size:12px;line-height:14px;transform:scaleX(0.8848);transform-origin:0 0;color:#000;white-space:pre;">Producto</span><div style="position:absolute;left:893.00px;top:340.00px;width:12.50px;height:12.50px;box-sizing:border-box;background:#fff;border:1px solid;border-color:#9a9a9a #fff #fff #9a9a9a;box-shadow:inset 1px 1px 0 #696969,inset -1px -1px 0 #e3e3e3;"></div><span style="position:absolute;left:911.00px;top:340px;font-size:12px;line-height:14px;transform:scaleX(0.9306);transform-origin:0 0;color:#000;white-space:pre;">Inactivo?</span><span style="position:absolute;left:404.00px;top:363px;font-size:12px;line-height:14px;transform:scaleX(0.8890);transform-origin:0 0;color:#000;white-space:pre;">Descripción:</span><div style="position:absolute;left:490.00px;top:362.00px;width:490.00px;height:17.00px;box-sizing:border-box;background:#b4e4f0;border:1px solid;border-color:#9a9a9a #fff #fff #9a9a9a;box-shadow:inset 1px 1px 0 #696969,inset -1px -1px 0 #e3e3e3;"></div><span style="position:absolute;left:494.00px;top:364px;font-size:12px;line-height:14px;transform:scaleX(0.8813);transform-origin:0 0;color:#000;white-space:pre;">Aceite Corazon 1 Lt. PVC</span><span style="position:absolute;left:404.00px;top:386px;font-size:12px;line-height:14px;transform:scaleX(0.8715);transform-origin:0 0;color:#000;white-space:pre;">Para Lista:</span><div style="position:absolute;left:490.00px;top:386.00px;width:490.00px;height:17.00px;box-sizing:border-box;background:#fff;border:1px solid;border-color:#9a9a9a #fff #fff #9a9a9a;box-shadow:inset 1px 1px 0 #696969,inset -1px -1px 0 #e3e3e3;"></div><span style="position:absolute;left:404.00px;top:410px;font-size:12px;line-height:14px;transform:scaleX(0.8859);transform-origin:0 0;color:#000;white-space:pre;">Marca:</span><div style="position:absolute;left:490.00px;top:411.00px;width:46.00px;height:17.00px;box-sizing:border-box;background:#b4e4f0;border:1px solid;border-color:#9a9a9a #fff #fff #9a9a9a;box-shadow:inset 1px 1px 0 #696969,inset -1px -1px 0 #e3e3e3;"></div><span style="position:absolute;right:730.30px;top:413px;font-size:12px;line-height:14px;transform:scaleX(0.9000);transform-origin:100% 0;color:#000;white-space:pre;">1</span><svg style="position:absolute;left:543.00px;top:411.30px" width="16" height="16" viewBox="-8 -8 16 16"><circle r="7" fill="#4789e1"/><circle r="7" fill="none" stroke="#6aa4ee" stroke-width="0.8"/><text x="0" y="3.900" font-family='"Liberation Sans",sans-serif' font-size="11" font-weight="bold" fill="#fff" text-anchor="middle">?</text></svg><span style="position:absolute;left:565.30px;top:412px;font-size:12px;line-height:14px;transform:scaleX(0.9000);transform-origin:0 0;color:#000;white-space:pre;">F2</span><span style="position:absolute;left:593.20px;top:410px;font-size:12px;line-height:14px;transform:scaleX(0.8598);transform-origin:0 0;color:#000;white-space:pre;">Corazon</span><span style="position:absolute;left:404.00px;top:434px;font-size:12px;line-height:14px;transform:scaleX(0.8211);transform-origin:0 0;color:#000;white-space:pre;">Familia:</span><div style="position:absolute;left:490.00px;top:433.00px;width:46.00px;height:17.00px;box-sizing:border-box;background:#b4e4f0;border:1px solid;border-color:#9a9a9a #fff #fff #9a9a9a;box-shadow:inset 1px 1px 0 #696969,inset -1px -1px 0 #e3e3e3;"></div><span style="position:absolute;right:730.30px;top:435px;font-size:12px;line-height:14px;transform:scaleX(0.9000);transform-origin:100% 0;color:#000;white-space:pre;">1</span><svg style="position:absolute;left:543.00px;top:433.30px" width="16" height="16" viewBox="-8 -8 16 16"><circle r="7" fill="#4789e1"/><circle r="7" fill="none" stroke="#6aa4ee" stroke-width="0.8"/><text x="0" y="3.900" font-family='"Liberation Sans",sans-serif' font-size="11" font-weight="bold" fill="#fff" text-anchor="middle">?</text></svg><span style="position:absolute;left:565.30px;top:434px;font-size:12px;line-height:14px;transform:scaleX(0.9000);transform-origin:0 0;color:#000;white-space:pre;">F3</span><span style="position:absolute;left:593.20px;top:434px;font-size:12px;line-height:14px;transform:scaleX(0.8557);transform-origin:0 0;color:#000;white-space:pre;">Comestibles</span><span style="position:absolute;left:404.00px;top:459px;font-size:12px;line-height:14px;transform:scaleX(0.8604);transform-origin:0 0;color:#000;white-space:pre;">Rubro:</span><div style="position:absolute;left:490.00px;top:458.00px;width:46.00px;height:17.00px;box-sizing:border-box;background:#b4e4f0;border:1px solid;border-color:#9a9a9a #fff #fff #9a9a9a;box-shadow:inset 1px 1px 0 #696969,inset -1px -1px 0 #e3e3e3;"></div><span style="position:absolute;right:730.30px;top:460px;font-size:12px;line-height:14px;transform:scaleX(0.9000);transform-origin:100% 0;color:#000;white-space:pre;">1</span><svg style="position:absolute;left:543.00px;top:459.70px" width="16" height="16" viewBox="-8 -8 16 16"><circle r="7" fill="#4789e1"/><circle r="7" fill="none" stroke="#6aa4ee" stroke-width="0.8"/><text x="0" y="3.900" font-family='"Liberation Sans",sans-serif' font-size="11" font-weight="bold" fill="#fff" text-anchor="middle">?</text></svg><span style="position:absolute;left:565.30px;top:460px;font-size:12px;line-height:14px;transform:scaleX(0.9000);transform-origin:0 0;color:#000;white-space:pre;">F4</span><span style="position:absolute;left:593.20px;top:459px;font-size:12px;line-height:14px;transform:scaleX(0.9019);transform-origin:0 0;color:#000;white-space:pre;">Aceites</span><span style="position:absolute;left:404.00px;top:481px;font-size:12px;line-height:14px;transform:scaleX(0.8780);transform-origin:0 0;color:#000;white-space:pre;">Sub Rubro:</span><div style="position:absolute;left:490.00px;top:482.00px;width:46.00px;height:17.00px;box-sizing:border-box;background:#b4e4f0;border:1px solid;border-color:#9a9a9a #fff #fff #9a9a9a;box-shadow:inset 1px 1px 0 #696969,inset -1px -1px 0 #e3e3e3;"></div><span style="position:absolute;right:730.30px;top:484px;font-size:12px;line-height:14px;transform:scaleX(0.9000);transform-origin:100% 0;color:#000;white-space:pre;">1</span><svg style="position:absolute;left:543.00px;top:482.30px" width="16" height="16" viewBox="-8 -8 16 16"><circle r="7" fill="#4789e1"/><circle r="7" fill="none" stroke="#6aa4ee" stroke-width="0.8"/><text x="0" y="3.900" font-family='"Liberation Sans",sans-serif' font-size="11" font-weight="bold" fill="#fff" text-anchor="middle">?</text></svg><span style="position:absolute;left:565.30px;top:483px;font-size:12px;line-height:14px;transform:scaleX(0.9000);transform-origin:0 0;color:#000;white-space:pre;">F5</span><span style="position:absolute;left:593.20px;top:481px;font-size:12px;line-height:14px;transform:scaleX(0.8833);transform-origin:0 0;color:#000;white-space:pre;">Aceites PVC</span><span style="position:absolute;left:404.00px;top:506px;font-size:12px;line-height:14px;transform:scaleX(0.8892);transform-origin:0 0;color:#000;white-space:pre;">Alic. IVA:</span><div style="position:absolute;left:490.00px;top:506.00px;width:46.00px;height:17.00px;box-sizing:border-box;background:#b4e4f0;border:1px solid;border-color:#9a9a9a #fff #fff #9a9a9a;box-shadow:inset 1px 1px 0 #696969,inset -1px -1px 0 #e3e3e3;"></div><span style="position:absolute;right:730.30px;top:508px;font-size:12px;line-height:14px;transform:scaleX(0.9000);transform-origin:100% 0;color:#000;white-space:pre;">6</span><svg style="position:absolute;left:543.00px;top:507.30px" width="16" height="16" viewBox="-8 -8 16 16"><circle r="7" fill="#4789e1"/><circle r="7" fill="none" stroke="#6aa4ee" stroke-width="0.8"/><text x="0" y="3.900" font-family='"Liberation Sans",sans-serif' font-size="11" font-weight="bold" fill="#fff" text-anchor="middle">?</text></svg><span style="position:absolute;left:565.30px;top:508px;font-size:12px;line-height:14px;transform:scaleX(0.9000);transform-origin:0 0;color:#000;white-space:pre;">F6</span><span style="position:absolute;left:593.20px;top:506px;font-size:12px;line-height:14px;transform:scaleX(0.8550);transform-origin:0 0;color:#000;white-space:pre;">%21,00</span><span style="position:absolute;left:644.50px;top:506px;font-size:12px;line-height:14px;transform:scaleX(0.8198);transform-origin:0 0;color:#000;white-space:pre;">21%</span><span style="position:absolute;left:404.00px;top:530px;font-size:12px;line-height:14px;transform:scaleX(0.8598);transform-origin:0 0;color:#000;white-space:pre;">U. Comercial:</span><div style="position:absolute;left:490.00px;top:531.00px;width:46.00px;height:17.00px;box-sizing:border-box;background:#fff;border:1px solid;border-color:#9a9a9a #fff #fff #9a9a9a;box-shadow:inset 1px 1px 0 #696969,inset -1px -1px 0 #e3e3e3;"></div><span style="position:absolute;right:730.30px;top:533px;font-size:12px;line-height:14px;transform:scaleX(0.9000);transform-origin:100% 0;color:#000;white-space:pre;">0</span><svg style="position:absolute;left:543.00px;top:531.30px" width="16" height="16" viewBox="-8 -8 16 16"><circle r="7" fill="#4789e1"/><circle r="7" fill="none" stroke="#6aa4ee" stroke-width="0.8"/><text x="0" y="3.900" font-family='"Liberation Sans",sans-serif' font-size="11" font-weight="bold" fill="#fff" text-anchor="middle">?</text></svg><span style="position:absolute;left:565.30px;top:532px;font-size:12px;line-height:14px;transform:scaleX(0.9000);transform-origin:0 0;color:#000;white-space:pre;">F7</span><span style="position:absolute;left:404.00px;top:555px;font-size:12px;line-height:14px;transform:scaleX(0.8737);transform-origin:0 0;color:#000;white-space:pre;">U. x Pallet:</span><div style="position:absolute;left:461.00px;top:554.00px;width:66.50px;height:17.00px;box-sizing:border-box;background:#fff;border:1px solid;border-color:#9a9a9a #fff #fff #9a9a9a;box-shadow:inset 1px 1px 0 #696969,inset -1px -1px 0 #e3e3e3;"></div><span style="position:absolute;right:738.50px;top:556px;font-size:12px;line-height:14px;transform:scaleX(0.9000);transform-origin:100% 0;color:#000;white-space:pre;">0</span><span style="position:absolute;left:555.30px;top:555px;font-size:12px;line-height:14px;transform:scaleX(0.8761);transform-origin:0 0;color:#000;white-space:pre;">U. x Bulto:</span><div style="position:absolute;left:611.00px;top:554.00px;width:66.50px;height:17.00px;box-sizing:border-box;background:#fff;border:1px solid;border-color:#9a9a9a #fff #fff #9a9a9a;box-shadow:inset 1px 1px 0 #696969,inset -1px -1px 0 #e3e3e3;"></div><span style="position:absolute;right:588.50px;top:556px;font-size:12px;line-height:14px;transform:scaleX(0.9000);transform-origin:100% 0;color:#000;white-space:pre;">0</span><span style="position:absolute;left:702.00px;top:555px;font-size:12px;line-height:14px;transform:scaleX(0.8871);transform-origin:0 0;color:#000;white-space:pre;">U. Presentacion:</span><div style="position:absolute;left:788.00px;top:554.00px;width:46.20px;height:17.00px;box-sizing:border-box;background:#fff;border:1px solid;border-color:#9a9a9a #fff #fff #9a9a9a;box-shadow:inset 1px 1px 0 #696969,inset -1px -1px 0 #e3e3e3;"></div><span style="position:absolute;right:432.50px;top:556px;font-size:12px;line-height:14px;transform:scaleX(0.9000);transform-origin:100% 0;color:#000;white-space:pre;">0.000</span><div style="position:absolute;left:878.00px;top:597.50px;width:81.00px;height:22.50px;box-sizing:border-box;border:1px solid #4a4a4a;background:#f0f0f0;"></div><div style="position:absolute;left:879.00px;top:598.50px;width:79.00px;height:20.50px;box-sizing:border-box;background:#f0f0f0;border:1px solid;border-color:#fff #696969 #696969 #fff;box-shadow:inset -1px -1px 0 #a0a0a0;"></div><svg style="position:absolute;left:881px;top:600px" width="16" height="16" viewBox="-8 -8 16 16"><circle r="7" fill="#2fae8a"/><circle r="7" fill="none" stroke="#7fd0b8" stroke-width="0.800"/><path d="M-3.300 0l2.300 2.500L3.500 -2.300" fill="none" stroke="#fff" stroke-width="2"/></svg><span style="position:absolute;left:905.00px;top:602px;font-size:12px;line-height:14px;transform:scaleX(0.8641);transform-origin:0 0;color:#000;white-space:pre;"><u>O</u>K</span><div style="position:absolute;left:965.00px;top:598.00px;width:81.00px;height:21.70px;box-sizing:border-box;background:#f0f0f0;border:1px solid;border-color:#fff #696969 #696969 #fff;box-shadow:inset -1px -1px 0 #a0a0a0;"></div><svg style="position:absolute;left:968px;top:600px" width="16" height="16" viewBox="-8 -8 16 16"><circle r="7" fill="#d9434f"/><circle r="7" fill="none" stroke="#ee8f96" stroke-width="0.800"/><path d="M-2.800 -2.800L2.800 2.800M2.800 -2.800L-2.800 2.800" fill="none" stroke="#fff" stroke-width="2"/></svg><span style="position:absolute;left:992.00px;top:602px;font-size:12px;line-height:14px;transform:scaleX(0.8744);transform-origin:0 0;color:#000;white-space:pre;"><u>C</u>ancelar</span><div style="position:absolute;left:0.00px;top:636.00px;width:1263.00px;height:21.00px;background:#f0f0f0;"></div><div style="position:absolute;left:0.00px;top:636.00px;width:1263.00px;height:1.00px;background:#5a6a78;"></div><div style="position:absolute;left:0.00px;top:637.00px;width:1263.00px;height:1.00px;background:#fff;"></div><div style="position:absolute;left:8.00px;top:640.00px;width:416.00px;height:15.00px;box-sizing:border-box;border:1px solid;border-color:#8a8a8a #fff #fff #8a8a8a;"></div><div style="position:absolute;left:432.00px;top:640.00px;width:415.00px;height:15.00px;box-sizing:border-box;border:1px solid;border-color:#8a8a8a #fff #fff #8a8a8a;"></div><div style="position:absolute;left:856.00px;top:640.00px;width:414.00px;height:15.00px;box-sizing:border-box;border:1px solid;border-color:#8a8a8a #fff #fff #8a8a8a;"></div><span style="position:absolute;left:11.40px;top:641px;font-size:12px;line-height:14px;transform:scaleX(0.9012);transform-origin:0 0;color:#000;white-space:pre;">Descripción del Artículo</span></body></html>
